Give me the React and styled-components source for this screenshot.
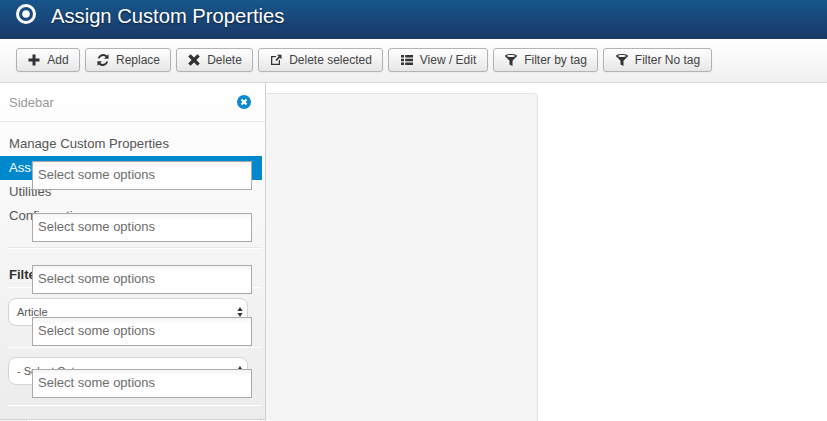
import React from 'react';
import styled, { createGlobalStyle } from 'styled-components';

const GlobalStyle = createGlobalStyle`
  html, body {
    margin: 0;
    padding: 0;
    height: 100%;
    overflow: hidden;
    background: #fff;
    font-family: "Liberation Sans", Arial, sans-serif;
    color: #333;
  }
`;

const Page = styled.div`
  position: relative;
  width: 827px;
  height: 421px;
  overflow: hidden;
`;

const Header = styled.header`
  height: 39px;
  box-sizing: border-box;
  padding: 4px 0 0 16px;
  display: flex;
  align-items: flex-start;
  gap: 15px;
  background: linear-gradient(to bottom, #17568c, #1a3867);
`;

const Title = styled.h1`
  margin: 0;
  font-size: 20.2px;
  font-weight: 400;
  line-height: 24px;
  color: #fff;
  text-shadow: 0 1px 2px rgba(0, 0, 0, 0.6);
`;

const Toolbar = styled.div`
  height: 44px;
  box-sizing: border-box;
  padding: 9px 16px 0;
  display: flex;
  gap: 5px;
  border-bottom: 1px solid #d6d6d6;
  background: linear-gradient(to bottom, #ffffff, #f0f0f0);
`;

const Button = styled.button`
  height: 24px;
  box-sizing: border-box;
  width: ${(p) => p.$w}px;
  padding: 0;
  display: flex;
  align-items: center;
  justify-content: center;
  gap: 6px;
  font-family: inherit;
  font-size: 12px;
  color: #444;
  border: 1px solid #b3b3b3;
  border-radius: 3px;
  background: linear-gradient(to bottom, #ffffff, #e6e6e6);
  box-shadow: 0 1px 2px rgba(0, 0, 0, 0.05);
`;

const Body = styled.div`
  display: flex;
  height: 338px;
`;

const SidebarColumn = styled.div`
  position: relative;
  z-index: 1;
  width: 266px;
  flex: none;
`;

const Sidebar = styled.aside`
  height: 337px;
  box-sizing: border-box;
  border-right: 1px solid #d2d2d2;
  border-bottom: 1px solid #d2d2d2;
  background: linear-gradient(to bottom, #ffffff, #ececec);
`;

const SidebarStub = styled.div`
  width: 27px;
  height: 1px;
  box-sizing: border-box;
  border-right: 1px solid #d6d6d6;
  background: #eee;
`;

const SidebarHead = styled.div`
  height: 39px;
  box-sizing: border-box;
  padding: 0 14px 0 9px;
  display: flex;
  align-items: center;
  justify-content: space-between;
  font-size: 13px;
  color: #999;
  border-bottom: 1px solid #e8e8e8;
`;

const NavList = styled.nav`
  padding: 10px 3px 0 0;
  height: 125px;
  box-sizing: border-box;
`;

const NavItem = styled.div`
  height: 24px;
  box-sizing: border-box;
  padding-left: 9px;
  font-size: 13.15px;
  line-height: 24px;
  color: ${(p) => (p.$active ? '#fff' : '#555')};
  background: ${(p) => (p.$active ? '#0088cc' : 'transparent')};
`;

const Divider = styled.div`
  height: 1px;
  margin: ${(p) => p.$top || 0}px 3px 0 8px;
  background: ${(p) => (p.$light ? '#fff' : '#e8e8e8')};
  box-shadow: ${(p) => (p.$light ? 'none' : '0 1px 0 #fff')};
`;

const FilterTitle = styled.div`
  margin: 18px 0 0 9px;
  height: 21px;
  font-size: 13px;
  font-weight: 700;
  line-height: 17px;
  color: #333;
`;

const SelectBox = styled.div`
  position: relative;
  height: 28px;
  box-sizing: border-box;
  width: 240px;
  margin: ${(p) => p.$top}px 0 0 8px;
  padding-left: 8px;
  font-size: 11px;
  line-height: 26px;
  color: #555;
  background: #fff;
  border: 1px solid #d4d4d4;
  border-radius: 8px;
`;

const Arrows = styled.svg`
  position: absolute;
  right: 4px;
  top: 8px;
`;

const Main = styled.main`
  flex: 1;
  padding-top: 10px;
  margin-left: -6px;
`;

const Well = styled.div`
  width: 278px;
  height: 340px;
  box-sizing: border-box;
  border: 1px solid #e3e3e3;
  border-radius: 4px;
  background: #f5f5f5;
`;

const ChosenStack = styled.div`
  position: absolute;
  z-index: 2;
  left: 32px;
  top: 161px;
  display: flex;
  flex-direction: column;
  gap: 23px;
`;

const Chosen = styled.div`
  width: 220px;
  height: 29px;
  box-sizing: border-box;
  padding-left: 5px;
  font-size: 13px;
  line-height: 26px;
  color: #6c6c6c;
  background: linear-gradient(to bottom, #f4f4f4, #fff 6px);
  border: 1px solid #aaa;
`;

const Glyph = ({ children }) => (
  <svg width="14" height="14" viewBox="0 0 14 14" fill="#333">{children}</svg>
);

const icons = {
  plus: <Glyph><path d="M5.500 1.500h3V5.500h4v3h-4v4h-3v-4h-4v-3h4z" /></Glyph>,
  refresh: (
    <Glyph>
      <path d="M12.600 1.200v4.600H8l1.700-1.700A3.900 3.900 0 0 0 3.500 5.600H1.800a5.600 5.600 0 0 1 9.400-3z" />
      <path d="M1.400 12.800V8.200H6L4.300 9.900a3.900 3.900 0 0 0 6.200-1.500h1.700a5.600 5.600 0 0 1-9.400 3z" />
    </Glyph>
  ),
  cross: <Glyph><path d="M3.600 1.200 7 4.600l3.400-3.400 2.400 2.400L9.400 7l3.400 3.400-2.400 2.400L7 9.400l-3.400 3.400-2.400-2.400L4.600 7 1.200 3.600z" /></Glyph>,
  out: (
    <Glyph>
      <path d="M2 3h5.500L6.300 4.300H3.300v6.400h6.400V7.800L11 6.500V12H2z" />
      <path d="M8 1.800h4.500v4.500l-1.600-1.600-3.400 3.400-1.200-1.200 3.400-3.400z" />
    </Glyph>
  ),
  list: (
    <Glyph>
      <path d="M1 2h3v2.600H1zM5.200 2H13v2.600H5.200zM1 5.700h3v2.600H1zM5.200 5.700H13v2.600H5.200zM1 9.400h3V12H1zM5.200 9.400H13V12H5.200z" />
    </Glyph>
  ),
  filter: (
    <Glyph>
      <path fillRule="evenodd" d="M7 1c3.300 0 6 .9 6 2 0 .5-.5 1-1.400 1.400L8.500 7.800V13l-3-1.500V7.800L2.400 4.400C1.500 4 1 3.500 1 3c0-1.100 2.700-2 6-2zm0 1C4.800 2 3 2.400 3 3s1.800 1 4 1 4-.4 4-1-1.800-1-4-1z" />
    </Glyph>
  ),
};

const buttons = [
  { label: 'Add', icon: 'plus', w: 64 },
  { label: 'Replace', icon: 'refresh', w: 86 },
  { label: 'Delete', icon: 'cross', w: 77 },
  { label: 'Delete selected', icon: 'out', w: 125 },
  { label: 'View / Edit', icon: 'list', w: 100 },
  { label: 'Filter by tag', icon: 'filter', w: 105 },
  { label: 'Filter No tag', icon: 'filter', w: 109 },
];

const UpDown = () => (
  <Arrows width="6" height="10" viewBox="0 0 6 10" fill="#333">
    <path d="M3 0l2.600 4H.4zM3 10 .4 6h5.200z" />
  </Arrows>
);

const App = () => (
  <Page>
    <GlobalStyle />
    <Header>
      <svg width="20" height="20" viewBox="0 0 20 20">
        <circle cx="10" cy="10" r="8.500" fill="none" stroke="#fff" strokeWidth="3" />
        <circle cx="10" cy="10" r="3.800" fill="#fff" />
      </svg>
      <Title>Assign Custom Properties</Title>
    </Header>
    <Toolbar>
      {buttons.map((b) => (
        <Button key={b.label} $w={b.w}>
          {icons[b.icon]}
          {b.label}
        </Button>
      ))}
    </Toolbar>
    <Body>
      <SidebarColumn>
        <Sidebar>
          <SidebarHead>
            Sidebar
            <svg width="14" height="14" viewBox="0 0 14 14">
              <circle cx="7" cy="7" r="7" fill="#0a8ad0" />
              <path d="M4.500 4.500l5 5M9.500 4.500l-5 5" stroke="#fff" strokeWidth="2.200" />
            </svg>
          </SidebarHead>
          <NavList>
            <NavItem>Manage Custom Properties</NavItem>
            <NavItem $active>Assign Custom Properties</NavItem>
            <NavItem>Utilities</NavItem>
            <NavItem>Configuration</NavItem>
          </NavList>
          <Divider />
          <FilterTitle>Filters</FilterTitle>
          <Divider $light />
          <SelectBox $top={10}>Article<UpDown /></SelectBox>
          <Divider $light $top={21} />
          <SelectBox $top={9}>- Select Category<UpDown /></SelectBox>
          <Divider $light $top={20} />
        </Sidebar>
        <SidebarStub />
      </SidebarColumn>
      <Main>
        <Well />
      </Main>
    </Body>
    <ChosenStack>
      {[0, 1, 2, 3, 4].map((i) => (
        <Chosen key={i}>Select some options</Chosen>
      ))}
    </ChosenStack>
  </Page>
);

export default App;
